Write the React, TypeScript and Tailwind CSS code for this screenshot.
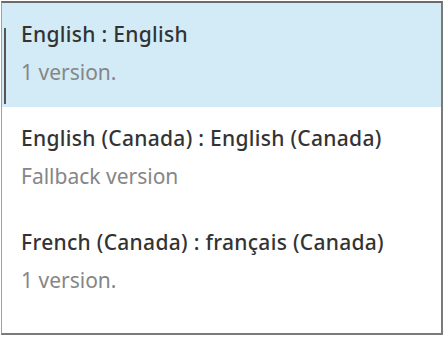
const items = [
  { title: 'English : English', sub: '1 version.', selected: true },
  { title: 'English (Canada) : English (Canada)', sub: 'Fallback version', selected: false },
  { title: 'French (Canada) : français (Canada)', sub: '1 version.', selected: false },
]

export default function App() {
  return (
    <div className="h-[337px] w-[446px] bg-white pl-[1px] pt-[1px]" style={{ fontFamily: '"Noto Sans", "Open Sans", sans-serif' }}>
      <div className="flex h-[334px] w-[442px] flex-col border-t-2 border-r-2 border-b-2 border-l border-t-[#6a6a6a] border-r-[#7a7a7a] border-b-[#7a7a7a] border-l-[#a0a0a0] bg-white">
        {items.map((item) => (
          <div
            key={item.title}
            className={`relative flex h-[104px] shrink-0 flex-col pl-[19px] pt-[17px] ${item.selected ? 'bg-[#d3ebf6]' : 'bg-white'}`}
          >
            {item.selected && <span className="absolute left-[2px] top-[25px] h-[76px] w-[2px] bg-[#555555]" />}
            <div className="text-[21px] font-medium leading-[28px] tracking-[0.3px] text-[#333333]">{item.title}</div>
            <div className="mt-[10px] text-[21px] leading-[28px] text-[#868686]">{item.sub}</div>
          </div>
        ))}
      </div>
    </div>
  )
}
